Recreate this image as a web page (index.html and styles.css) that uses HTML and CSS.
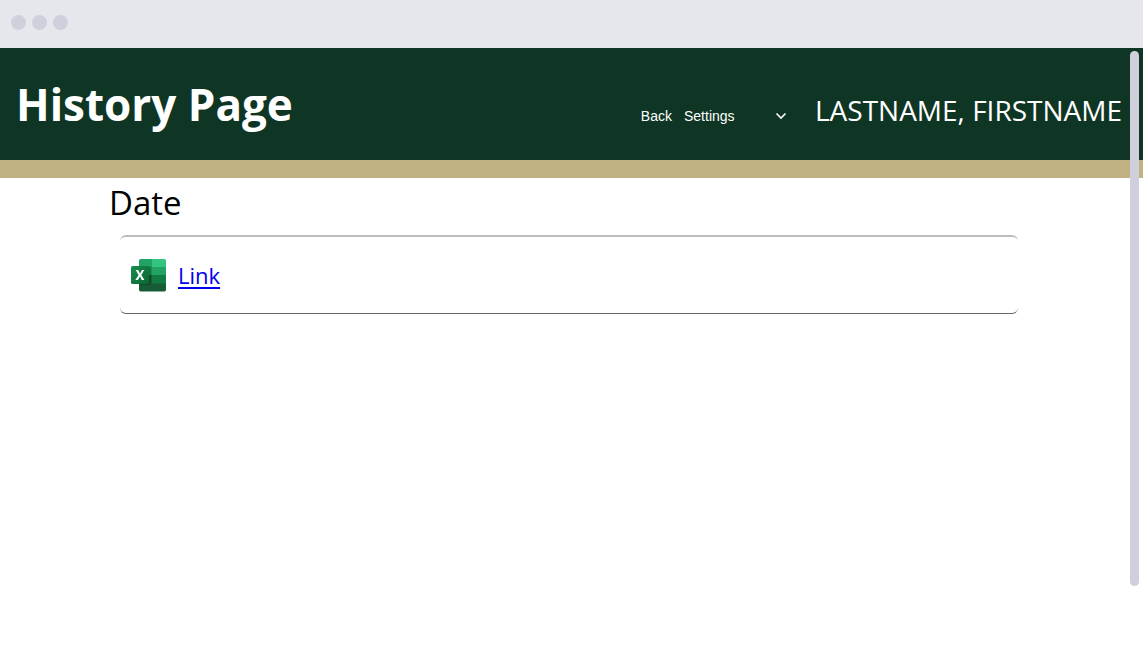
FILE: index.html
```html
<!DOCTYPE html>
<html lang="en">
<head>
<meta charset="utf-8">
<title>History Page</title>
<link rel="stylesheet" href="styles.css">
</head>
<body>
<div class="window-bar"><span class="dot"></span><span class="dot"></span><span class="dot"></span></div>
<div class="viewport">
  <header class="header">
    <h1 class="title">History Page</h1>
    <nav class="nav">
      <button class="back" type="button">Back</button>
      <div class="picker">
        <select class="settings" aria-label="Settings"><option>Settings</option></select>
        <svg class="chevron" viewBox="0 0 12 8" aria-hidden="true"><path d="M1.500 1.500 6 6l4.500-4.500" fill="none" stroke="#fff" stroke-width="1.600"/></svg>
      </div>
    </nav>
    <span class="user">LASTNAME, FIRSTNAME</span>
  </header>
  <main class="content">
    <h2 class="date">Date</h2>
    <div class="entry">
      <svg class="excel" viewBox="0 0 35 33" aria-hidden="true">
        <defs>
          <clipPath id="sheet"><rect x="8" y="0" width="27" height="32.500" rx="1.700"/></clipPath>
          <linearGradient id="tile" x1="0" y1="0" x2="1" y2="1"><stop offset="0" stop-color="#188c4f"/><stop offset="1" stop-color="#0b6631"/></linearGradient>
        </defs>
        <g clip-path="url(#sheet)">
          <path fill="#21a366" d="M8 0h14v8H8z"/>
          <path fill="#33c481" d="M21 0h14v8H21z"/>
          <path fill="#169154" d="M8 8h13v8H8z"/>
          <path fill="#21a366" d="M21 8h14v8H21z"/>
          <path fill="#185c37" d="M8 16h27v17H8z"/>
          <path fill="#107c41" d="M21 16h14v8.500H21z"/>
          <path fill="#000" opacity=".2" d="M8 7h10.500q1.500 0 1.500 1.500v16q0 1.500-1.500 1.500H8z"/>
        </g>
        <rect y="7" width="18" height="18" rx="1.600" fill="url(#tile)"/>
        <path fill="#fff" d="m4.300 21 3.300-5-3-5h2.600l1.500 3.100.3.700.3-.7 1.600-3.100h2.400l-3 5 3.100 5h-2.600L9.200 17.700l-.2-.5-.2.500L6.900 21z"/>
      </svg>
      <a class="link" href="#">Link</a>
    </div>
  </main>
  <div class="scroll-thumb"></div>
</div>
</body>
</html>
```
FILE: styles.css
```css
* { box-sizing: border-box; }
body {
  margin: 0;
  min-height: 100vh;
  display: flex;
  flex-direction: column;
  background: #fff;
  color: #000;
  font-family: "Segoe UI", "Open Sans", "Noto Sans", sans-serif;
}
.window-bar {
  display: flex;
  gap: 6px;
  height: 48px;
  padding: 15px 11px;
  background: #e6e7ec;
}
.dot {
  width: 15px;
  height: 15px;
  border-radius: 50%;
  background: #cfd0dc;
}
.viewport { position: relative; flex: 1; }
.header {
  display: flex;
  align-items: center;
  height: 130px;
  padding: 0 21px 0 16px;
  background: #0f3624;
  border-bottom: 18px solid #c0b283;
  color: #fff;
  white-space: nowrap;
}
.title {
  margin: 0 auto 0 0;
  font-size: 44px;
  line-height: 60px;
  font-weight: 700;
}
.nav {
  display: flex;
  align-items: center;
  gap: 12px;
  margin-right: 28px;
  padding-top: 24px;
  font-family: "Liberation Sans", Arial, sans-serif;
  font-size: 14px;
}
.back, .settings {
  margin: 0;
  padding: 0;
  border: 0;
  background: transparent;
  color: #fff;
  font: inherit;
  line-height: 20px;
}
.picker {
  display: grid;
  align-items: center;
  width: 103px;
}
.settings { appearance: none; grid-area: 1 / 1; width: 100%; }
.settings option { color: #000; }
.chevron {
  grid-area: 1 / 1;
  justify-self: end;
  width: 12px;
  height: 8px;
  pointer-events: none;
}
.user {
  padding-top: 12px;
  font-size: 28px;
  line-height: 40px;
}
.content { padding: 0 125px 0 109px; }
.date {
  margin: 0;
  padding: 1px 0 8px;
  font-size: 33px;
  line-height: 48px;
  font-weight: 400;
}
.entry {
  display: flex;
  align-items: center;
  gap: 12px;
  height: 79px;
  margin-left: 11px;
  padding: 0 11px;
  border-top: 2px solid #bcbcbc;
  border-bottom: 1px solid #666;
  border-radius: 6px;
}
.excel { width: 35px; height: 33px; }
.link {
  color: #00e;
  font-size: 22px;
  line-height: 32px;
  text-decoration-thickness: 2px;
  text-underline-offset: 3px;
}
.scroll-thumb {
  position: absolute;
  top: 3px;
  right: 4px;
  width: 9px;
  height: 535px;
  border-radius: 5px;
  background: #cfd0dc;
}
```
